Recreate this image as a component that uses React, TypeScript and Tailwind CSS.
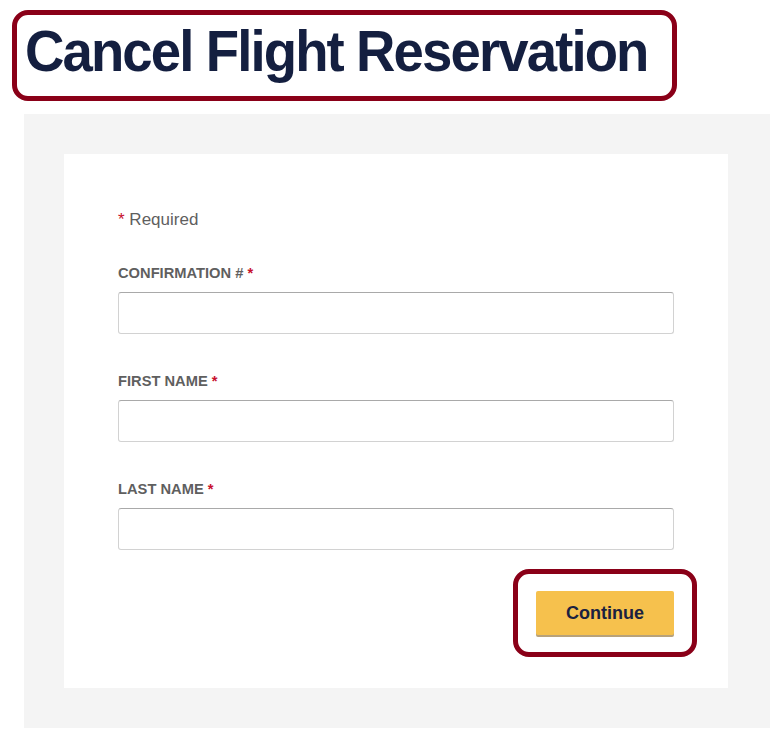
const font = { fontFamily: '"Liberation Sans", Arial, Helvetica, sans-serif' }

function Field({ label }: { label: string }) {
  return (
    <div className="flex flex-col">
      <label className="text-[14.7px] font-bold uppercase leading-[18px] text-[#5f5f5f]">
        {label} <span className="text-[#c8102e]">*</span>
      </label>
      <input
        type="text"
        className="mt-[10px] h-[42px] w-full rounded-[3px] border border-[#d2d2d2] border-t-[#a9a9a9] bg-white px-3 outline-none"
      />
    </div>
  )
}

export default function App() {
  return (
    <div className="min-h-[751px] w-[770px] bg-white pt-[10px]" style={font}>
      <div className="ml-[12px] flex h-[91px] w-[665px] items-center overflow-hidden rounded-[16px] border-[5px] border-[#8a0018] pb-[10px] pl-[8px]">
        <h1 className="origin-left scale-x-[0.94] whitespace-nowrap text-[58px] font-bold leading-none tracking-[-2px] text-[#141f40]">
          Cancel Flight Reservation
        </h1>
      </div>
      <div className="ml-[24px] mt-[13px] w-[746px] bg-[#f4f4f4] px-[40px] py-[40px]">
        <div className="w-[664px] bg-white px-[54px] pb-[31px] pt-[56px]">
          <p className="text-[17px] leading-[20px] text-[#5f5f5f]">
            <span className="text-[#c8102e]">*</span> Required
          </p>
          <div className="mt-[34px] flex flex-col gap-[38px]">
            <Field label="Confirmation #" />
            <Field label="First Name" />
            <Field label="Last Name" />
          </div>
          <div className="mt-[19px] flex justify-end">
            <div className="-mr-[23px] flex h-[88px] w-[184px] items-center justify-center rounded-[16px] border-[5px] border-[#8a0018]">
              <button className="h-[44px] w-[138px] rounded-[2px] bg-[#f6c14d] text-[18px] font-bold text-[#1b2240] shadow-[0_2px_0_#b8a27a]">
                Continue
              </button>
            </div>
          </div>
        </div>
      </div>
    </div>
  )
}
